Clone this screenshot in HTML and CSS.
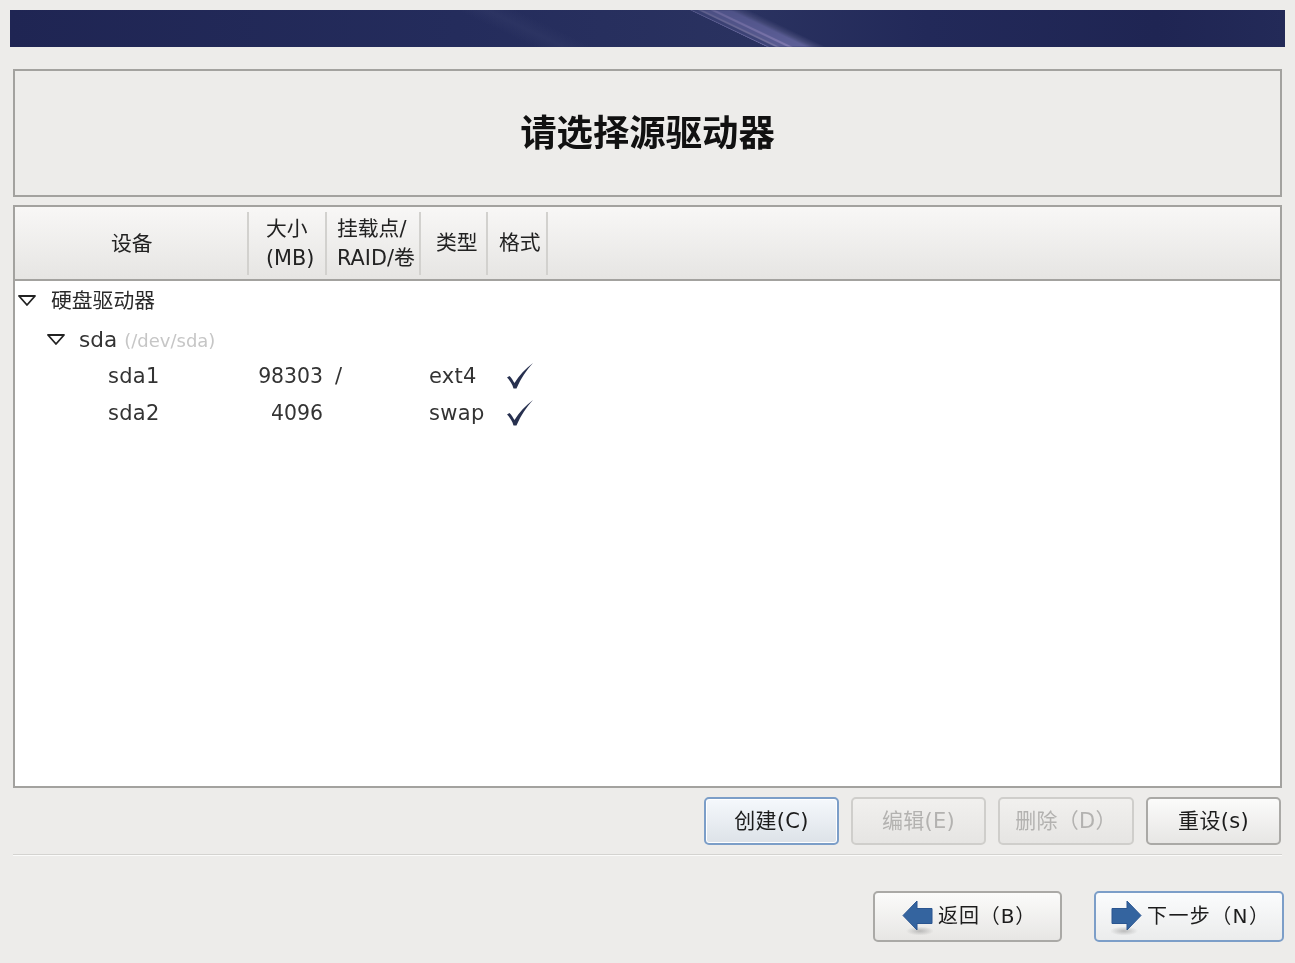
FILE: index.html
```html
<!DOCTYPE html>
<html lang="zh">
<head>
<meta charset="utf-8">
<title>请选择源驱动器</title>
<link rel="stylesheet" href="styles.css">
</head>
<body>
<div class="banner"><div class="streak-soft"></div><div class="streak"></div></div>
<div class="title-panel"><h1>请选择源驱动器</h1></div>
<div class="table-panel">
  <div class="thead">
    <div class="th c1"><span>设备</span></div>
    <div class="th c2"><span>大小<br>(MB)</span></div>
    <div class="th c3"><span>挂载点/<br>RAID/卷</span></div>
    <div class="th c4"><span>类型</span></div>
    <div class="th c5"><span>格式</span></div>
  </div>
  <div class="tbody">
    <div class="group g1">
      <svg class="tri" viewBox="0 0 18 11"><path d="M1 1h16L9 10z" fill="#fff" stroke="#222" stroke-width="1.8" stroke-linejoin="round"/></svg>
      <span>硬盘驱动器</span>
    </div>
    <div class="group g2">
      <svg class="tri" viewBox="0 0 18 11"><path d="M1 1h16L9 10z" fill="#fff" stroke="#222" stroke-width="1.8" stroke-linejoin="round"/></svg>
      <span class="disk">sda</span><span class="path">(/dev/sda)</span>
    </div>
    <div class="row">
      <span class="r-dev">sda1</span><span class="r-size">98303</span><span class="r-mount">/</span><span class="r-type">ext4</span>
      <svg class="check" viewBox="0 0 28 26"><path d="M1 14.500 3.500 13C5.500 15 7 17.500 8.500 20 13 12.500 19.500 5.500 27 0 20.500 7 15 15 10.500 25.500H7.500C6.500 21.500 4 17.500 1 14.500z" fill="#27304f"/></svg>
    </div>
    <div class="row">
      <span class="r-dev">sda2</span><span class="r-size">4096</span><span class="r-mount"></span><span class="r-type">swap</span>
      <svg class="check" viewBox="0 0 28 26"><path d="M1 14.500 3.500 13C5.500 15 7 17.500 8.500 20 13 12.500 19.500 5.500 27 0 20.500 7 15 15 10.500 25.500H7.500C6.500 21.500 4 17.500 1 14.500z" fill="#27304f"/></svg>
    </div>
  </div>
</div>
<div class="actions">
  <div class="btn focus b-create">创建(C)</div>
  <div class="btn off b-edit">编辑(E)</div>
  <div class="btn off b-del">删除（D）</div>
  <div class="btn b-reset">重设(s)</div>
</div>
<div class="sep"></div>
<div class="nav">
  <div class="btn nav-btn b-back">
    <svg class="arrow" viewBox="0 0 31 36"><defs><radialGradient id="sa"><stop offset="0" stop-color="#999" stop-opacity=".6"/><stop offset="1" stop-color="#999" stop-opacity="0"/></radialGradient></defs><ellipse cx="18" cy="31" rx="14" ry="4.500" fill="url(#sa)"/><path d="M1 15.500 15 1v7.500h15v15H15V30z" fill="#34649f" stroke="#2a5590" stroke-width="1"/></svg>
    <span>返回（B）</span>
  </div>
  <div class="btn nav-btn focus-plain b-next">
    <svg class="arrow" viewBox="0 0 31 36"><defs><radialGradient id="sb"><stop offset="0" stop-color="#999" stop-opacity=".6"/><stop offset="1" stop-color="#999" stop-opacity="0"/></radialGradient></defs><ellipse cx="13" cy="31" rx="14" ry="4.500" fill="url(#sb)"/><path d="M30 15.500 16 1v7.500H1v15h15V30z" fill="#34649f" stroke="#2a5590" stroke-width="1"/></svg>
    <span>下一步（N）</span>
  </div>
</div>
</body>
</html>
```
FILE: styles.css
```css
* { box-sizing: border-box; }
html, body { margin: 0; height: 963px; overflow: hidden; }
body {
  background: #edecea;
  padding: 10px 13px 0;
  font-family: "DejaVu Sans", "Noto Sans CJK SC", sans-serif;
  font-size: 21px;
  color: #2a2a2a;
}
body > * { filter: blur(.45px); }
.banner {
  position: relative;
  overflow: hidden;
  height: 37px;
  margin: 0 -3px 0 -3px;
  width: 1275px;
  filter: none;
  background: linear-gradient(90deg, #1f2553 0%, #242c5c 35%, #2a3260 58%, #222959 72%, #1f2553 90%, #232a58 100%);
}
.streak, .streak-soft {
  position: absolute;
  top: 0;
  height: 37px;
  transform: skewX(64.5deg);
}
.streak {
  left: 718px;
  width: 60px;
  background: linear-gradient(90deg, #68689c 0 2px, #3f4578 3px 8px, #74729f 10px 12px, #5a5c92 14px 20px, #7e78ae 22px 25px, #5e6098 27px 40px, rgba(80,84,130,.7) 48px, rgba(50,56,100,0) 60px);
  -webkit-mask-image: linear-gradient(rgba(0,0,0,.7), #000);
  mask-image: linear-gradient(rgba(0,0,0,.7), #000);
  filter: blur(.6px);
}
.streak-soft {
  left: 485px;
  width: 60px;
  opacity: .6;
  background: linear-gradient(90deg, transparent, #303866, transparent);
}
.title-panel {
  margin-top: 22px;
  height: 128px;
  width: 1269px;
  border: 2px solid #a3a29f;
  display: flex;
  align-items: center;
  justify-content: center;
}
h1 {
  margin: 2px 0 0;
  font-size: 36.4px;
  font-weight: 700;
  color: #111;
  line-height: 1;
}
.table-panel {
  margin-top: 8px;
  height: 583px;
  width: 1269px;
  border: 2px solid #a3a29f;
  background: #fff;
}
.thead {
  height: 74px;
  display: flex;
  align-items: center;
  padding: 5px 0 4px;
  background: linear-gradient(#f8f7f6, #e6e5e3);
  border-bottom: 2px solid #a3a29f;
  color: #222;
  font-size: 20.8px;
  line-height: 29px;
}
.th {
  height: 100%;
  display: flex;
  align-items: center;
  justify-content: flex-start;
  text-align: left;
  border-right: 2px solid #d2d1ce;
  white-space: nowrap;
}
.c1 { width: 234px; padding: 2px 0 0 96px; }
.c2 { width: 78px; padding-left: 17px; }
.c3 { width: 94px; padding-left: 10px; }
.c4 { width: 67px; padding-left: 15px; }
.c5 { width: 60px; padding-left: 11px; }
.tbody { padding-top: 3px; }
.group { display: flex; align-items: center; }
.tri { width: 18px; height: 11px; flex: none; }
.g1 { height: 30px; padding-left: 3px; font-size: 20.8px; }
.g1 .tri { margin-right: 15px; margin-top: 3px; }
.g2 { height: 36px; padding-left: 32px; color: #333; margin-top: 7px; }
.g2 .tri { margin-right: 14px; margin-top: 1px; }
.disk { font-size: 21.6px; }
.path { font-size: 18px; color: #c6c6c6; margin-left: 7px; margin-top: 2px; }
.row { height: 37px; display: flex; align-items: center; color: #333; }
.r-dev { margin-left: 93px; width: 140px; letter-spacing: .3px; }
.r-size { width: 75px; text-align: right; font-size: 20.4px; }
.r-mount { width: 94px; padding-left: 12px; }
.r-type { width: 76px; padding-left: 12px; letter-spacing: .3px; }
.check { width: 28px; height: 26px; flex: none; margin-left: 13px; margin-top: 0; }
.actions {
  margin-top: 9px;
  display: flex;
  justify-content: flex-end;
  width: 1268px;
}
.btn {
  height: 48px;
  padding-bottom: 4px;
  border: 2px solid #aaa9a6;
  border-radius: 5px;
  background: linear-gradient(#fbfbfa, #e7e6e4);
  display: flex;
  align-items: center;
  justify-content: center;
  color: #1c1c1c;
  white-space: nowrap;
  letter-spacing: .3px;
}
.focus {
  border-color: #7c9ec8;
  background: linear-gradient(#f5f8fc, #dde2e8);
  box-shadow: inset 0 0 0 1px #fff;
}
.off { color: #b3b2b0; background: linear-gradient(#f1f0ee, #e6e5e3); border-color: #cfcecb; }
.b-create { width: 135px; margin-right: 12px; }
.b-edit { width: 135px; margin-right: 12px; }
.b-del { width: 136px; margin-right: 12px; }
.b-reset { width: 135px; }
.sep {
  margin-top: 9px;
  width: 1269px;
  height: 2px;
  background: linear-gradient(#d4d3d0 50%, #fbfbfa 50%);
}
.nav {
  margin-top: 35px;
  display: flex;
  justify-content: flex-end;
  width: 1271px;
}
.nav-btn { height: 51px; padding-bottom: 5px; gap: 5px; font-size: 20px; letter-spacing: 1.4px; justify-content: flex-start; }
.focus-plain { border-color: #7c9ec8; background: linear-gradient(#fbfcfd, #ebecec); }
.b-back { width: 189px; margin-right: 32px; padding-left: 27px; letter-spacing: .9px; }
.b-next { width: 190px; padding-left: 15px; }
.arrow { width: 31px; height: 36px; flex: none; margin-top: 8px; }
```
